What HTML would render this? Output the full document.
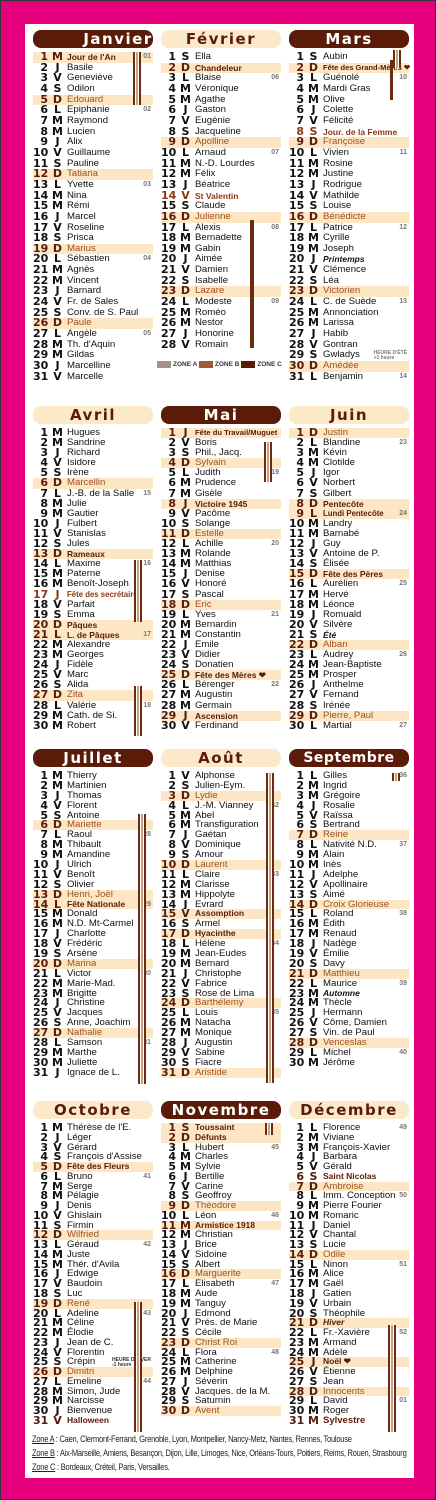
<!DOCTYPE html>
<html><head><meta charset="utf-8">
<style>
*{margin:0;padding:0;box-sizing:border-box}
body{width:436px;height:1500px;background:#e5007d;position:relative;overflow:hidden;font-family:"Liberation Sans",sans-serif;color:#111}
#fr{position:absolute;left:0;top:0;width:436px;height:1500px;border:1px solid #333}
#pn{position:absolute;left:25px;top:24px;width:389px;height:1454px;background:#fff}
.c{position:absolute;width:120px}
.h{height:18px;border-radius:8px;font:bold 15px "DejaVu Sans",sans-serif;letter-spacing:1.5px;text-align:center;line-height:18px;overflow:hidden;white-space:nowrap}
.d{background:#5a1b09;color:#fff}
.l{background:#fce9c9;color:#5a1b09}
.b{margin-top:4px}
.b p{position:relative;font-size:9.6px;padding-left:34px;white-space:nowrap;overflow:visible}
.b p b{position:absolute;left:0;top:0;width:15px;text-align:right;font:bold 11px "DejaVu Sans",sans-serif;line-height:inherit}
.b p i{position:absolute;left:18px;top:0;width:13px;text-align:center;font:bold 11px "DejaVu Sans",sans-serif;font-style:normal;line-height:inherit}
.b p u{position:absolute;right:2px;top:0;text-decoration:none;font-size:7px;color:#777;font-weight:bold}
.b p.s{background:#fce6c3;color:#a0521e}
.b p.s i,.b p.s b{color:#5a1b09}
.b p.f{font-weight:bold;color:#5a1b09;font-size:8.5px}
.b p.s.f{color:#5a1b09}
.r1 p{height:10.67px;line-height:10.67px}
.r2 p{height:10.1px;line-height:10.1px}
.r3 p{height:9.9px;line-height:9.9px}
.r4 p{height:9.77px;line-height:9.77px}
.v{position:absolute;width:8px;background:linear-gradient(90deg,#6b2a12 0 2px,#fff 2px 3px,#c9a07a 3px 5px,#fff 5px 6px,#6b2a12 6px 8px)}
#ft{position:absolute;left:32px;top:1433px;font-family:"Liberation Sans Narrow","Liberation Sans",sans-serif;font-size:9.5px;line-height:14px;color:#222;white-space:nowrap;letter-spacing:-0.3px;transform:scaleX(0.79);transform-origin:left top}
#ft span{text-decoration:underline}
.z{position:absolute;top:361px;font:bold 6.5px "Liberation Sans",sans-serif;color:#333}
.z s{display:inline-block;width:14px;height:7px;vertical-align:middle;margin-right:2px}
</style></head><body>
<div id="fr"></div>
<div id="pn"></div>

<!-- ROW 1 -->
<div class="c" style="left:33px;top:30px">
<div class="h d" style="padding-left:50px">Janvier</div>
<div class="b r1">
<p class="s f"><b>1</b><i>M</i>Jour de l'An<u>01</u></p>
<p><b>2</b><i>J</i>Basile</p>
<p><b>3</b><i>V</i>Geneviève</p>
<p><b>4</b><i>S</i>Odilon</p>
<p class="s"><b>5</b><i>D</i>Edouard</p>
<p><b>6</b><i>L</i>Epiphanie<u>02</u></p>
<p><b>7</b><i>M</i>Raymond</p>
<p><b>8</b><i>M</i>Lucien</p>
<p><b>9</b><i>J</i>Alix</p>
<p><b>10</b><i>V</i>Guillaume</p>
<p><b>11</b><i>S</i>Pauline</p>
<p class="s"><b>12</b><i>D</i>Tatiana</p>
<p><b>13</b><i>L</i>Yvette<u>03</u></p>
<p><b>14</b><i>M</i>Nina</p>
<p><b>15</b><i>M</i>Rémi</p>
<p><b>16</b><i>J</i>Marcel</p>
<p><b>17</b><i>V</i>Roseline</p>
<p><b>18</b><i>S</i>Prisca</p>
<p class="s"><b>19</b><i>D</i>Marius</p>
<p><b>20</b><i>L</i>Sébastien<u>04</u></p>
<p><b>21</b><i>M</i>Agnès</p>
<p><b>22</b><i>M</i>Vincent</p>
<p><b>23</b><i>J</i>Barnard</p>
<p><b>24</b><i>V</i>Fr. de Sales</p>
<p><b>25</b><i>S</i>Conv. de S. Paul</p>
<p class="s"><b>26</b><i>D</i>Paule</p>
<p><b>27</b><i>L</i>Angèle<u>05</u></p>
<p><b>28</b><i>M</i>Th. d'Aquin</p>
<p><b>29</b><i>M</i>Gildas</p>
<p><b>30</b><i>J</i>Marcelline</p>
<p><b>31</b><i>V</i>Marcelle</p>
</div></div>
<div class="v" style="left:133px;top:52px;height:53px"></div>

<div class="c" style="left:161px;top:30px">
<div class="h l">Février</div>
<div class="b r1">
<p><b>1</b><i>S</i>Ella</p>
<p class="s f"><b>2</b><i>D</i>Chandeleur</p>
<p><b>3</b><i>L</i>Blaise<u>06</u></p>
<p><b>4</b><i>M</i>Véronique</p>
<p><b>5</b><i>M</i>Agathe</p>
<p><b>6</b><i>J</i>Gaston</p>
<p><b>7</b><i>V</i>Eugénie</p>
<p><b>8</b><i>S</i>Jacqueline</p>
<p class="s"><b>9</b><i>D</i>Apolline</p>
<p><b>10</b><i>L</i>Arnaud<u>07</u></p>
<p><b>11</b><i>M</i>N.-D. Lourdes</p>
<p><b>12</b><i>M</i>Félix</p>
<p><b>13</b><i>J</i>Béatrice</p>
<p class="f" style="color:#8a3a10"><b>14</b><i>V</i>St Valentin</p>
<p><b>15</b><i>S</i>Claude</p>
<p class="s"><b>16</b><i>D</i>Julienne</p>
<p><b>17</b><i>L</i>Alexis<u>08</u></p>
<p><b>18</b><i>M</i>Bernadette</p>
<p><b>19</b><i>M</i>Gabin</p>
<p><b>20</b><i>J</i>Aimée</p>
<p><b>21</b><i>V</i>Damien</p>
<p><b>22</b><i>S</i>Isabelle</p>
<p class="s"><b>23</b><i>D</i>Lazare</p>
<p><b>24</b><i>L</i>Modeste<u>09</u></p>
<p><b>25</b><i>M</i>Roméo</p>
<p><b>26</b><i>M</i>Nestor</p>
<p><b>27</b><i>J</i>Honorine</p>
<p><b>28</b><i>V</i>Romain</p>
</div></div>
<div class="v" style="left:250px;top:220px;height:128px;width:4px;background:#6b2a12"></div>
<div class="z" style="left:157px"><s style="background:#a89283"></s>ZONE A <s style="background:#9b5a3a"></s>ZONE B <s style="background:#5a1b09"></s>ZONE C</div>

<div class="c" style="left:289px;top:30px">
<div class="h d">Mars</div>
<div class="b r1">
<p><b>1</b><i>S</i>Aubin</p>
<p class="s f" style="font-size:7.5px"><b>2</b><i>D</i>Fête des Grand-Mères ❤</p>
<p><b>3</b><i>L</i>Guénolé<u>10</u></p>
<p><b>4</b><i>M</i>Mardi Gras</p>
<p><b>5</b><i>M</i>Olive</p>
<p><b>6</b><i>J</i>Colette</p>
<p><b>7</b><i>V</i>Félicité</p>
<p class="f" style="color:#8a3a10"><b>8</b><i>S</i>Jour. de la Femme</p>
<p class="s"><b>9</b><i>D</i>Françoise</p>
<p><b>10</b><i>L</i>Vivien<u>11</u></p>
<p><b>11</b><i>M</i>Rosine</p>
<p><b>12</b><i>M</i>Justine</p>
<p><b>13</b><i>J</i>Rodrigue</p>
<p><b>14</b><i>V</i>Mathilde</p>
<p><b>15</b><i>S</i>Louise</p>
<p class="s"><b>16</b><i>D</i>Bénédicte</p>
<p><b>17</b><i>L</i>Patrice<u>12</u></p>
<p><b>18</b><i>M</i>Cyrille</p>
<p><b>19</b><i>M</i>Joseph</p>
<p class="f" style="font-style:italic;color:#111"><b>20</b><i>J</i>Printemps</p>
<p><b>21</b><i>V</i>Clémence</p>
<p><b>22</b><i>S</i>Léa</p>
<p class="s"><b>23</b><i>D</i>Victorien</p>
<p><b>24</b><i>L</i>C. de Suède<u>13</u></p>
<p><b>25</b><i>M</i>Annonciation</p>
<p><b>26</b><i>M</i>Larissa</p>
<p><b>27</b><i>J</i>Habib</p>
<p><b>28</b><i>V</i>Gontran</p>
<p><b>29</b><i>S</i>Gwladys<u style="font-size:5px;line-height:5px;top:1px">HEURE D'ÉTÉ<br>+1 heure</u></p>
<p class="s"><b>30</b><i>D</i>Amédée</p>
<p><b>31</b><i>L</i>Benjamin<u>14</u></p>
</div></div>
<div class="v" style="left:393px;top:50px;height:18px"></div>
<div class="v" style="left:390px;top:60px;height:40px;width:3px;background:#6b2a12"></div>

<!-- ROW 2 -->
<div class="c" style="left:33px;top:406px">
<div class="h l">Avril</div>
<div class="b r2">
<p><b>1</b><i>M</i>Hugues</p>
<p><b>2</b><i>M</i>Sandrine</p>
<p><b>3</b><i>J</i>Richard</p>
<p><b>4</b><i>V</i>Isidore</p>
<p><b>5</b><i>S</i>Irène</p>
<p class="s"><b>6</b><i>D</i>Marcellin</p>
<p><b>7</b><i>L</i>J.-B. de la Salle<u>15</u></p>
<p><b>8</b><i>M</i>Julie</p>
<p><b>9</b><i>M</i>Gautier</p>
<p><b>10</b><i>J</i>Fulbert</p>
<p><b>11</b><i>V</i>Stanislas</p>
<p><b>12</b><i>S</i>Jules</p>
<p class="s f"><b>13</b><i>D</i>Rameaux</p>
<p><b>14</b><i>L</i>Maxime<u>16</u></p>
<p><b>15</b><i>M</i>Paterne</p>
<p><b>16</b><i>M</i>Benoît-Joseph</p>
<p class="f" style="color:#8a3a10;font-size:7.8px"><b>17</b><i>J</i>Fête des secrétaires</p>
<p><b>18</b><i>V</i>Parfait</p>
<p><b>19</b><i>S</i>Emma</p>
<p class="s f"><b>20</b><i>D</i>Pâques</p>
<p class="s f"><b>21</b><i>L</i>L. de Pâques<u>17</u></p>
<p><b>22</b><i>M</i>Alexandre</p>
<p><b>23</b><i>M</i>Georges</p>
<p><b>24</b><i>J</i>Fidèle</p>
<p><b>25</b><i>V</i>Marc</p>
<p><b>26</b><i>S</i>Alida</p>
<p class="s"><b>27</b><i>D</i>Zita</p>
<p><b>28</b><i>L</i>Valérie<u>18</u></p>
<p><b>29</b><i>M</i>Cath. de Si.</p>
<p><b>30</b><i>M</i>Robert</p>
</div></div>
<div class="v" style="left:134px;top:560px;height:62px"></div>
<div class="v" style="left:134px;top:686px;height:50px"></div>

<div class="c" style="left:161px;top:406px">
<div class="h d">Mai</div>
<div class="b r2">
<p class="s f" style="font-size:7.6px"><b>1</b><i>J</i>Fête du Travail/Muguet</p>
<p><b>2</b><i>V</i>Boris</p>
<p><b>3</b><i>S</i>Phil., Jacq.</p>
<p class="s"><b>4</b><i>D</i>Sylvain</p>
<p><b>5</b><i>L</i>Judith<u>19</u></p>
<p><b>6</b><i>M</i>Prudence</p>
<p><b>7</b><i>M</i>Gisèle</p>
<p class="s f"><b>8</b><i>J</i>Victoire 1945</p>
<p><b>9</b><i>V</i>Pacôme</p>
<p><b>10</b><i>S</i>Solange</p>
<p class="s"><b>11</b><i>D</i>Estelle</p>
<p><b>12</b><i>L</i>Achille<u>20</u></p>
<p><b>13</b><i>M</i>Rolande</p>
<p><b>14</b><i>M</i>Matthias</p>
<p><b>15</b><i>J</i>Denise</p>
<p><b>16</b><i>V</i>Honoré</p>
<p><b>17</b><i>S</i>Pascal</p>
<p class="s"><b>18</b><i>D</i>Eric</p>
<p><b>19</b><i>L</i>Yves<u>21</u></p>
<p><b>20</b><i>M</i>Bernardin</p>
<p><b>21</b><i>M</i>Constantin</p>
<p><b>22</b><i>J</i>Emile</p>
<p><b>23</b><i>V</i>Didier</p>
<p><b>24</b><i>S</i>Donatien</p>
<p class="s f"><b>25</b><i>D</i>Fête des Mères ❤</p>
<p><b>26</b><i>L</i>Bérenger<u>22</u></p>
<p><b>27</b><i>M</i>Augustin</p>
<p><b>28</b><i>M</i>Germain</p>
<p class="s f"><b>29</b><i>J</i>Ascension</p>
<p><b>30</b><i>V</i>Ferdinand</p>
</div></div>
<div class="v" style="left:264px;top:442px;height:40px"></div>

<div class="c" style="left:289px;top:406px">
<div class="h l">Juin</div>
<div class="b r2">
<p class="s"><b>1</b><i>D</i>Justin</p>
<p><b>2</b><i>L</i>Blandine<u>23</u></p>
<p><b>3</b><i>M</i>Kévin</p>
<p><b>4</b><i>M</i>Clotilde</p>
<p><b>5</b><i>J</i>Igor</p>
<p><b>6</b><i>V</i>Norbert</p>
<p><b>7</b><i>S</i>Gilbert</p>
<p class="s f"><b>8</b><i>D</i>Pentecôte</p>
<p class="s f" style="font-size:7.8px"><b>9</b><i>L</i>Lundi Pentecôte<u>24</u></p>
<p><b>10</b><i>M</i>Landry</p>
<p><b>11</b><i>M</i>Barnabé</p>
<p><b>12</b><i>J</i>Guy</p>
<p><b>13</b><i>V</i>Antoine de P.</p>
<p><b>14</b><i>S</i>Élisée</p>
<p class="s f"><b>15</b><i>D</i>Fête des Pères</p>
<p><b>16</b><i>L</i>Aurélien<u>25</u></p>
<p><b>17</b><i>M</i>Hervé</p>
<p><b>18</b><i>M</i>Léonce</p>
<p><b>19</b><i>J</i>Romuald</p>
<p><b>20</b><i>V</i>Silvère</p>
<p class="f" style="font-style:italic;color:#111"><b>21</b><i>S</i>Été</p>
<p class="s"><b>22</b><i>D</i>Alban</p>
<p><b>23</b><i>L</i>Audrey<u>26</u></p>
<p><b>24</b><i>M</i>Jean-Baptiste</p>
<p><b>25</b><i>M</i>Prosper</p>
<p><b>26</b><i>J</i>Anthelme</p>
<p><b>27</b><i>V</i>Fernand</p>
<p><b>28</b><i>S</i>Irénée</p>
<p class="s"><b>29</b><i>D</i>Pierre, Paul</p>
<p><b>30</b><i>L</i>Martial<u>27</u></p>
</div></div>

<!-- ROW 3 -->
<div class="c" style="left:33px;top:749px">
<div class="h d">Juillet</div>
<div class="b r3">
<p><b>1</b><i>M</i>Thierry</p>
<p><b>2</b><i>M</i>Martinien</p>
<p><b>3</b><i>J</i>Thomas</p>
<p><b>4</b><i>V</i>Florent</p>
<p><b>5</b><i>S</i>Antoine</p>
<p class="s"><b>6</b><i>D</i>Mariette</p>
<p><b>7</b><i>L</i>Raoul<u>28</u></p>
<p><b>8</b><i>M</i>Thibault</p>
<p><b>9</b><i>M</i>Amandine</p>
<p><b>10</b><i>J</i>Ulrich</p>
<p><b>11</b><i>V</i>Benoît</p>
<p><b>12</b><i>S</i>Olivier</p>
<p class="s"><b>13</b><i>D</i>Henri, Joël</p>
<p class="s f"><b>14</b><i>L</i>Fête Nationale<u>29</u></p>
<p><b>15</b><i>M</i>Donald</p>
<p><b>16</b><i>M</i>N.D. Mt-Carmel</p>
<p><b>17</b><i>J</i>Charlotte</p>
<p><b>18</b><i>V</i>Frédéric</p>
<p><b>19</b><i>S</i>Arsène</p>
<p class="s"><b>20</b><i>D</i>Marina</p>
<p><b>21</b><i>L</i>Victor<u>30</u></p>
<p><b>22</b><i>M</i>Marie-Mad.</p>
<p><b>23</b><i>M</i>Brigitte</p>
<p><b>24</b><i>J</i>Christine</p>
<p><b>25</b><i>V</i>Jacques</p>
<p><b>26</b><i>S</i>Anne, Joachim</p>
<p class="s"><b>27</b><i>D</i>Nathalie</p>
<p><b>28</b><i>L</i>Samson<u>31</u></p>
<p><b>29</b><i>M</i>Marthe</p>
<p><b>30</b><i>M</i>Juliette</p>
<p><b>31</b><i>J</i>Ignace de L.</p>
</div></div>
<div class="v" style="left:138px;top:814px;height:270px"></div>

<div class="c" style="left:161px;top:749px">
<div class="h l">Août</div>
<div class="b r3">
<p><b>1</b><i>V</i>Alphonse</p>
<p><b>2</b><i>S</i>Julien-Eym.</p>
<p class="s"><b>3</b><i>D</i>Lydie</p>
<p><b>4</b><i>L</i>J.-M. Vianney<u>32</u></p>
<p><b>5</b><i>M</i>Abel</p>
<p><b>6</b><i>M</i>Transfiguration</p>
<p><b>7</b><i>J</i>Gaétan</p>
<p><b>8</b><i>V</i>Dominique</p>
<p><b>9</b><i>S</i>Amour</p>
<p class="s"><b>10</b><i>D</i>Laurent</p>
<p><b>11</b><i>L</i>Claire<u>33</u></p>
<p><b>12</b><i>M</i>Clarisse</p>
<p><b>13</b><i>M</i>Hippolyte</p>
<p><b>14</b><i>J</i>Evrard</p>
<p class="s f"><b>15</b><i>V</i>Assomption</p>
<p><b>16</b><i>S</i>Armel</p>
<p class="s f"><b>17</b><i>D</i>Hyacinthe</p>
<p><b>18</b><i>L</i>Hélène<u>34</u></p>
<p><b>19</b><i>M</i>Jean-Eudes</p>
<p><b>20</b><i>M</i>Bernard</p>
<p><b>21</b><i>J</i>Christophe</p>
<p><b>22</b><i>V</i>Fabrice</p>
<p><b>23</b><i>S</i>Rose de Lima</p>
<p class="s"><b>24</b><i>D</i>Barthélemy</p>
<p><b>25</b><i>L</i>Louis<u>35</u></p>
<p><b>26</b><i>M</i>Natacha</p>
<p><b>27</b><i>M</i>Monique</p>
<p><b>28</b><i>J</i>Augustin</p>
<p><b>29</b><i>V</i>Sabine</p>
<p><b>30</b><i>S</i>Fiacre</p>
<p class="s"><b>31</b><i>D</i>Aristide</p>
</div></div>
<div class="v" style="left:266px;top:773px;height:310px"></div>

<div class="c" style="left:289px;top:749px">
<div class="h d" style="letter-spacing:0.5px;font-size:14px">Septembre</div>
<div class="b r3">
<p><b>1</b><i>L</i>Gilles<u>36</u></p>
<p><b>2</b><i>M</i>Ingrid</p>
<p><b>3</b><i>M</i>Grégoire</p>
<p><b>4</b><i>J</i>Rosalie</p>
<p><b>5</b><i>V</i>Raïssa</p>
<p><b>6</b><i>S</i>Bertrand</p>
<p class="s"><b>7</b><i>D</i>Reine</p>
<p><b>8</b><i>L</i>Nativité N.D.<u>37</u></p>
<p><b>9</b><i>M</i>Alain</p>
<p><b>10</b><i>M</i>Inès</p>
<p><b>11</b><i>J</i>Adelphe</p>
<p><b>12</b><i>V</i>Apollinaire</p>
<p><b>13</b><i>S</i>Aimé</p>
<p class="s"><b>14</b><i>D</i>Croix Glorieuse</p>
<p><b>15</b><i>L</i>Roland<u>38</u></p>
<p><b>16</b><i>M</i>Édith</p>
<p><b>17</b><i>M</i>Renaud</p>
<p><b>18</b><i>J</i>Nadège</p>
<p><b>19</b><i>V</i>Émilie</p>
<p><b>20</b><i>S</i>Davy</p>
<p class="s"><b>21</b><i>D</i>Matthieu</p>
<p><b>22</b><i>L</i>Maurice<u>39</u></p>
<p class="f" style="font-style:italic;color:#111"><b>23</b><i>M</i>Automne</p>
<p><b>24</b><i>M</i>Thècle</p>
<p><b>25</b><i>J</i>Hermann</p>
<p><b>26</b><i>V</i>Côme, Damien</p>
<p><b>27</b><i>S</i>Vin. de Paul</p>
<p class="s"><b>28</b><i>D</i>Venceslas</p>
<p><b>29</b><i>L</i>Michel<u>40</u></p>
<p><b>30</b><i>M</i>Jérôme</p>
</div></div>
<div class="v" style="left:392px;top:773px;height:8px"></div>

<!-- ROW 4 -->
<div class="c" style="left:33px;top:1101px">
<div class="h l">Octobre</div>
<div class="b r4">
<p><b>1</b><i>M</i>Thérèse de l'E.</p>
<p><b>2</b><i>J</i>Léger</p>
<p><b>3</b><i>V</i>Gérard</p>
<p><b>4</b><i>S</i>François d'Assise</p>
<p class="s f"><b>5</b><i>D</i>Fête des Fleurs</p>
<p><b>6</b><i>L</i>Bruno<u>41</u></p>
<p><b>7</b><i>M</i>Serge</p>
<p><b>8</b><i>M</i>Pélagie</p>
<p><b>9</b><i>J</i>Denis</p>
<p><b>10</b><i>V</i>Ghislain</p>
<p><b>11</b><i>S</i>Firmin</p>
<p class="s"><b>12</b><i>D</i>Wilfried</p>
<p><b>13</b><i>L</i>Géraud<u>42</u></p>
<p><b>14</b><i>M</i>Juste</p>
<p><b>15</b><i>M</i>Thér. d'Avila</p>
<p><b>16</b><i>J</i>Edwige</p>
<p><b>17</b><i>V</i>Baudoin</p>
<p><b>18</b><i>S</i>Luc</p>
<p class="s"><b>19</b><i>D</i>René</p>
<p><b>20</b><i>L</i>Adeline<u>43</u></p>
<p><b>21</b><i>M</i>Céline</p>
<p><b>22</b><i>M</i>Élodie</p>
<p><b>23</b><i>J</i>Jean de C.</p>
<p><b>24</b><i>V</i>Florentin</p>
<p><b>25</b><i>S</i>Crépin<u style="font-size:5px;line-height:5px;top:1px;color:#333;background:#fff">HEURE D'HIVER<br>-1 heure</u></p>
<p class="s"><b>26</b><i>D</i>Dimitri</p>
<p><b>27</b><i>L</i>Emeline<u>44</u></p>
<p><b>28</b><i>M</i>Simon, Jude</p>
<p><b>29</b><i>M</i>Narcisse</p>
<p><b>30</b><i>J</i>Bienvenue</p>
<p class="f" style="color:#5a1b09"><b>31</b><i>V</i>Halloween</p>
</div></div>
<div class="v" style="left:134px;top:1302px;height:130px"></div>

<div class="c" style="left:161px;top:1101px">
<div class="h d">Novembre</div>
<div class="b r4">
<p class="s f"><b>1</b><i>S</i>Toussaint</p>
<p class="s f"><b>2</b><i>D</i>Défunts</p>
<p><b>3</b><i>L</i>Hubert<u>45</u></p>
<p><b>4</b><i>M</i>Charles</p>
<p><b>5</b><i>M</i>Sylvie</p>
<p><b>6</b><i>J</i>Bertille</p>
<p><b>7</b><i>V</i>Carine</p>
<p><b>8</b><i>S</i>Geoffroy</p>
<p class="s"><b>9</b><i>D</i>Théodore</p>
<p><b>10</b><i>L</i>Léon<u>46</u></p>
<p class="s f"><b>11</b><i>M</i>Armistice 1918</p>
<p><b>12</b><i>M</i>Christian</p>
<p><b>13</b><i>J</i>Brice</p>
<p><b>14</b><i>V</i>Sidoine</p>
<p><b>15</b><i>S</i>Albert</p>
<p class="s"><b>16</b><i>D</i>Marguerite</p>
<p><b>17</b><i>L</i>Elisabeth<u>47</u></p>
<p><b>18</b><i>M</i>Aude</p>
<p><b>19</b><i>M</i>Tanguy</p>
<p><b>20</b><i>J</i>Edmond</p>
<p><b>21</b><i>V</i>Prés. de Marie</p>
<p><b>22</b><i>S</i>Cécile</p>
<p class="s"><b>23</b><i>D</i>Christ Roi</p>
<p><b>24</b><i>L</i>Flora<u>48</u></p>
<p><b>25</b><i>M</i>Catherine</p>
<p><b>26</b><i>M</i>Delphine</p>
<p><b>27</b><i>J</i>Séverin</p>
<p><b>28</b><i>V</i>Jacques. de la M.</p>
<p><b>29</b><i>S</i>Saturnin</p>
<p class="s"><b>30</b><i>D</i>Avent</p>
</div></div>
<div class="v" style="left:265px;top:1123px;height:12px"></div>

<div class="c" style="left:289px;top:1101px">
<div class="h l">Décembre</div>
<div class="b r4">
<p><b>1</b><i>L</i>Florence<u>49</u></p>
<p><b>2</b><i>M</i>Viviane</p>
<p><b>3</b><i>M</i>François-Xavier</p>
<p><b>4</b><i>J</i>Barbara</p>
<p><b>5</b><i>V</i>Gérald</p>
<p class="f" style="color:#5a1b09"><b>6</b><i>S</i>Saint Nicolas</p>
<p class="s"><b>7</b><i>D</i>Ambroise</p>
<p><b>8</b><i>L</i>Imm. Conception<u>50</u></p>
<p><b>9</b><i>M</i>Pierre Fourier</p>
<p><b>10</b><i>M</i>Romaric</p>
<p><b>11</b><i>J</i>Daniel</p>
<p><b>12</b><i>V</i>Chantal</p>
<p><b>13</b><i>S</i>Lucie</p>
<p class="s"><b>14</b><i>D</i>Odile</p>
<p><b>15</b><i>L</i>Ninon<u>51</u></p>
<p><b>16</b><i>M</i>Alice</p>
<p><b>17</b><i>M</i>Gaël</p>
<p><b>18</b><i>J</i>Gatien</p>
<p><b>19</b><i>V</i>Urbain</p>
<p><b>20</b><i>S</i>Théophile</p>
<p class="s f" style="font-style:italic"><b>21</b><i>D</i>Hiver</p>
<p><b>22</b><i>L</i>Fr.-Xavière<u>52</u></p>
<p><b>23</b><i>M</i>Armand</p>
<p><b>24</b><i>M</i>Adèle</p>
<p class="s f"><b>25</b><i>J</i>Noël ❤</p>
<p><b>26</b><i>V</i>Étienne</p>
<p><b>27</b><i>S</i>Jean</p>
<p class="s"><b>28</b><i>D</i>Innocents</p>
<p><b>29</b><i>L</i>David<u>01</u></p>
<p><b>30</b><i>M</i>Roger</p>
<p class="f" style="color:#5a1b09;font-size:9.5px"><b>31</b><i>M</i>Sylvestre</p>
</div></div>
<div class="v" style="left:388px;top:1325px;height:107px"></div>

<div id="ft"><span>Zone A</span> : Caen, Clermont-Ferrand, Grenoble, Lyon, Montpellier, Nancy-Metz, Nantes, Rennes, Toulouse<br><span>Zone B</span> : Aix-Marseille, Amiens, Besançon, Dijon, Lille, Limoges, Nice, Orléans-Tours, Poitiers, Reims, Rouen, Strasbourg<br><span>Zone C</span> : Bordeaux, Créteil, Paris, Versailles.</div>
</body></html>
